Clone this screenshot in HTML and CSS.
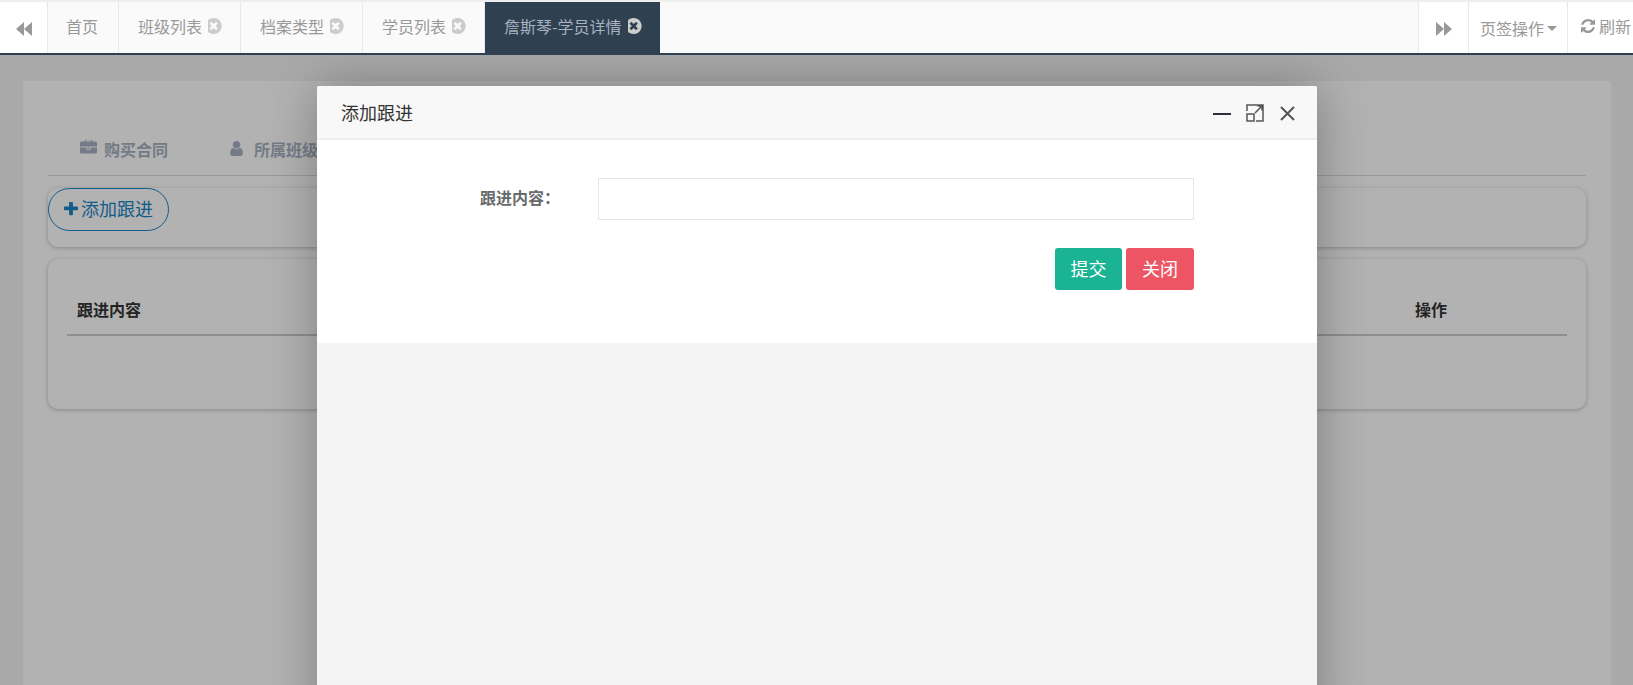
FILE: index.html
```html
<!DOCTYPE html>
<html lang="zh">
<head>
<meta charset="utf-8">
<title>学员详情</title>
<link rel="stylesheet" href="styles.css">
</head>
<body>
<nav class="nav">
  <button class="nav-arrow"><svg class="ico-arrow" viewBox="0 0 16 14"><path d="M8 0v14L0 7zM16 0v14L8 7z"/></svg></button>
  <div class="tabs">
    <a class="tab">首页</a>
    <a class="tab">班级列表<svg class="ico-close" viewBox="256 128 1280 1536"><path d="M1149 1122q0-26-19-45l-181-181 181-181q19-19 19-45 0-27-19-46l-90-90q-19-19-46-19-26 0-45 19l-181 181-181-181q-19-19-45-19-27 0-46 19l-90 90q-19 19-19 46 0 26 19 45l181 181-181 181q-19 19-19 45 0 27 19 46l90 90q19 19 46 19 26 0 45-19l181-181 181 181q19 19 45 19 27 0 46-19l90-90q19-19 19-46zm387-226q0 209-103 385.5t-279.5 279.5-385.5 103-385.5-103-279.5-279.5-103-385.5 103-385.5 279.5-279.5 385.5-103 385.5 103 279.5 279.5 103 385.5z"/></svg></a>
    <a class="tab">档案类型<svg class="ico-close" viewBox="256 128 1280 1536"><path d="M1149 1122q0-26-19-45l-181-181 181-181q19-19 19-45 0-27-19-46l-90-90q-19-19-46-19-26 0-45 19l-181 181-181-181q-19-19-45-19-27 0-46 19l-90 90q-19 19-19 46 0 26 19 45l181 181-181 181q-19 19-19 45 0 27 19 46l90 90q19 19 46 19 26 0 45-19l181-181 181 181q19 19 45 19 27 0 46-19l90-90q19-19 19-46zm387-226q0 209-103 385.5t-279.5 279.5-385.5 103-385.5-103-279.5-279.5-103-385.5 103-385.5 279.5-279.5 385.5-103 385.5 103 279.5 279.5 103 385.5z"/></svg></a>
    <a class="tab">学员列表<svg class="ico-close" viewBox="256 128 1280 1536"><path d="M1149 1122q0-26-19-45l-181-181 181-181q19-19 19-45 0-27-19-46l-90-90q-19-19-46-19-26 0-45 19l-181 181-181-181q-19-19-45-19-27 0-46 19l-90 90q-19 19-19 46 0 26 19 45l181 181-181 181q-19 19-19 45 0 27 19 46l90 90q19 19 46 19 26 0 45-19l181-181 181 181q19 19 45 19 27 0 46-19l90-90q19-19 19-46zm387-226q0 209-103 385.5t-279.5 279.5-385.5 103-385.5-103-279.5-279.5-103-385.5 103-385.5 279.5-279.5 385.5-103 385.5 103 279.5 279.5 103 385.5z"/></svg></a>
    <a class="tab tab-active">詹斯琴-学员详情<svg class="ico-close" viewBox="256 128 1280 1536"><path d="M1149 1122q0-26-19-45l-181-181 181-181q19-19 19-45 0-27-19-46l-90-90q-19-19-46-19-26 0-45 19l-181 181-181-181q-19-19-45-19-27 0-46 19l-90 90q-19 19-19 46 0 26 19 45l181 181-181 181q-19 19-19 45 0 27 19 46l90 90q19 19 46 19 26 0 45-19l181-181 181 181q19 19 45 19 27 0 46-19l90-90q19-19 19-46zm387-226q0 209-103 385.5t-279.5 279.5-385.5 103-385.5-103-279.5-279.5-103-385.5 103-385.5 279.5-279.5 385.5-103 385.5 103 279.5 279.5 103 385.5z"/></svg></a>
  </div>
  <div class="nav-right">
    <button class="nav-forward"><svg class="ico-arrow" viewBox="0 0 16 14"><path d="M0 0v14l8-7zM8 0v14l8-7z"/></svg></button>
    <button class="nav-menu">页签操作<span class="caret"></span></button>
    <button class="nav-refresh"><svg class="ico-refresh" viewBox="128 128 1536 1536"><path d="M1639 1056q0 5-1 7-64 268-268 434.5t-478 166.5q-146 0-282.5-55t-243.5-157l-129 129q-19 19-45 19t-45-19-19-45v-448q0-26 19-45t45-19h448q26 0 45 19t19 45-19 45l-137 137q71 66 161 102t187 36q134 0 250-65t186-179q11-17 53-117 8-23 30-23h192q13 0 22.5 9.5t9.5 22.5zm25-800v448q0 26-19 45t-45 19h-448q-26 0-45-19t-19-45 19-45l138-138q-148-137-349-137-134 0-250 65t-186 179q-11 17-53 117-8 23-30 23h-199q-13 0-22.5-9.5t-9.5-22.5v-7q65-268 270-434.5t480-166.5q146 0 284 55.5t245 156.5l130-129q19-19 45-19t45 19 19 45z"/></svg>刷新</button>
  </div>
</nav>

<main class="frame">
  <section class="panel">
    <div class="page-tabs">
      <a class="page-tab"><svg class="ico-case" viewBox="0 128 1792 1536"><path d="M640 256h512v-128h-512v128zm1152 640v480q0 66-47 113t-113 47h-1472q-66 0-113-47t-47-113v-480h672v160q0 26 19 45t45 19h320q26 0 45-19t19-45v-160h672zm-768 0v128h-256v-128h256zm768-480v384h-1792v-384q0-66 47-113t113-47h352v-160q0-40 28-68t68-28h576q40 0 68 28t28 68v160h352q66 0 113 47t47 113z"/></svg>购买合同</a>
      <a class="page-tab"><svg class="ico-user" viewBox="256 128 1280 1536"><path d="M1536 1399q0 109-62.5 187t-150.5 78h-854q-88 0-150.5-78t-62.5-187q0-85 8.5-160.5t31.5-152 58.5-131 94-89 134.5-34.5q131 128 313 128t313-128q76 0 134.5 34.5t94 89 58.5 131 31.5 152 8.5 160.5zm-256-887q0 159-112.5 271.5t-271.5 112.5-271.5-112.5-112.5-271.5 112.5-271.5 271.5-112.5 271.5 112.5 112.5 271.5z"/></svg>所属班级</a>
    </div>
    <div class="card card-toolbar">
      <button class="btn-add"><svg class="ico-plus" viewBox="192 192 1408 1408"><path d="M1600 736v192q0 40-28 68t-68 28h-416v416q0 40-28 68t-68 28h-192q-40 0-68-28t-28-68v-416h-416q-40 0-68-28t-28-68v-192q0-40 28-68t68-28h416v-416q0-40 28-68t68-28h192q40 0 68 28t28 68v416h416q40 0 68 28t28 68z"/></svg>添加跟进</button>
    </div>
    <div class="card card-table">
      <div class="table-head">
        <span class="th">跟进内容</span>
        <span class="th">操作</span>
      </div>
    </div>
  </section>

  <div class="overlay"></div>

  <div class="dialog">
    <header class="dialog-head">
      <h2 class="dialog-title">添加跟进</h2>
      <div class="dialog-tools">
        <span class="tool-min"></span>
        <svg class="tool-icon" viewBox="0 0 18 18"><path class="tool-stroke" d="M1 7V1h16v16H10M1 10h7v7H1zM9 9l7-7M11.500 2H16v4.500"/></svg>
        <svg class="tool-icon tool-close" viewBox="0 0 15 15"><path class="tool-stroke tool-stroke-x" d="M1 1l13 13M14 1L1 14"/></svg>
      </div>
    </header>
    <div class="dialog-body">
      <div class="form-row">
        <label class="form-label">跟进内容：</label>
        <input class="form-input" type="text">
      </div>
      <div class="form-actions">
        <button class="btn btn-ok">提交</button>
        <button class="btn btn-cancel">关闭</button>
      </div>
    </div>
    <div class="dialog-rest"></div>
  </div>
</main>
</body>
</html>
```
FILE: styles.css
```css
* { box-sizing: border-box; }
html, body { margin: 0; height: 685px; overflow: hidden; }
body {
  font-family: "Noto Sans CJK SC", "Liberation Sans", sans-serif;
  font-size: 16px;
  color: #676a6c;
  background: #f3f3f4;
}
button { font: inherit; border: 0; padding: 0; background: none; color: inherit; }

/* top tab bar */
.nav {
  display: flex;
  height: 55px;
  background: #fafafa;
  border-top: 2px solid #eeeeee;
  border-bottom: 2px solid #2f4050;
  color: #999;
}
.nav-arrow, .nav-forward { display: flex; align-items: center; justify-content: center; padding-top: 3px; background: #fff; fill: #999; }
.nav-arrow { width: 48px; border-right: 1px solid #e7eaec; }
.ico-arrow { width: 16px; height: 14px; }
.tabs { display: flex; flex: 1; }
.tab {
  display: flex;
  align-items: center;
  gap: 5px;
  padding: 0 19px 4px;
  border-right: 1px solid #e7eaec;
  line-height: 1;
  white-space: nowrap;
  width: 122px;
}
.tab:first-child { width: 71px; padding-left: 18px; }
.tab-active { width: 175px; background: #2f4050; color: #a7b1c2; border-right: 0; }
.ico-close { width: 14px; height: 16px; margin: 1px 0 0 1px; fill: #ccc; flex: none; }
.nav-right { display: flex; background: #fff; }
.nav-forward { width: 50px; border-left: 1px solid #e7eaec; }
.nav-menu {
  display: flex;
  align-items: center;
  width: 100px;
  padding: 1px 0 0 11px;
  border-left: 1px solid #e7eaec;
  border-right: 1px solid #e7eaec;
}
.caret {
  margin-left: 3px;
  border-left: 5px solid transparent;
  border-right: 5px solid transparent;
  border-top: 5px solid #999;
}
.nav-refresh {
  display: flex;
  align-items: center;
  gap: 4px;
  width: 65px;
  padding: 0 0 4px 13px;
  white-space: nowrap;
}
.ico-refresh { width: 14px; height: 14px; fill: #999; flex: none; }

/* page inside the frame */
.frame {
  position: relative;
  height: 630px;
  overflow: hidden;
  padding: 26px 22px 0 23px;
}
.panel {
  height: 100%;
  background: #fff;
  padding: 25px 25px 0;
}
.page-tabs {
  display: flex;
  height: 70px;
  padding: 28px 0 0 32px;
  border-bottom: 1px solid #ddd;
  font-weight: 700;
  color: #a7b1c2;
}
.page-tab { display: flex; align-items: flex-start; height: 30px; line-height: 30px; margin-right: 62px; white-space: nowrap; }
.ico-case { width: 17px; height: 15px; margin: 6px 7px 0 0; fill: #a7b1c2; }
.ico-user { width: 13px; height: 15px; margin: 7px 11px 0 0; fill: #a7b1c2; }
.card {
  margin-top: 12px;
  background: #fff;
  border-radius: 10px;
  box-shadow: 0 1px 4px rgba(0, 0, 0, .25);
}
.card-toolbar { height: 59px; }
.btn-add {
  display: flex;
  align-items: center;
  gap: 3px;
  width: 121px;
  height: 43px;
  margin-top: 1px;
  padding: 0 0 4px 15px;
  border: 1px solid #1c84c6;
  border-radius: 22px;
  color: #1c84c6;
  font-size: 18px;
  white-space: nowrap;
}
.ico-plus { width: 14px; height: 14px; margin-top: 3px; fill: #1c84c6; flex: none; }
.card-table { height: 150px; padding: 0 19px; }
.table-head {
  display: flex;
  justify-content: space-between;
  align-items: center;
  height: 77px;
  padding: 25px 120px 0 10px;
  border-bottom: 2px solid #ccc;
}
.th { font-weight: 700; color: #333; line-height: 30px; }

/* modal */
.overlay { position: absolute; inset: 0; background: rgba(0, 0, 0, .3); }
.dialog {
  position: absolute;
  top: 31px;
  left: 317px;
  width: 1000px;
  height: 640px;
  background: #f3f3f3;
  border-radius: 2px;
  box-shadow: 1px 1px 50px rgba(0, 0, 0, .3);
}
.dialog-head {
  display: flex;
  align-items: center;
  justify-content: space-between;
  height: 54px;
  padding: 0 22px 0 24px;
  background: #f8f8f8;
  border-bottom: 2px solid #eee;
  border-radius: 2px 2px 0 0;
}
.dialog-title { margin: 0; font-size: 18px; font-weight: 400; color: #333; }
.dialog-tools { display: flex; align-items: center; gap: 15px; margin-top: 2px; }
.tool-min { width: 18px; height: 2px; background: #2f2f3c; margin-top: 1px; }
.tool-icon { width: 18px; height: 18px; }
.tool-close { width: 15px; height: 15px; margin-left: 1px; }
.tool-stroke { fill: none; stroke: #555; stroke-width: 1.500; }
.tool-stroke-x { stroke-width: 2; }
.dialog-body {
  height: 203px;
  padding: 38px 123px 0 0;
  background: #fff;
}
.form-row { display: flex; align-items: center; justify-content: flex-end; height: 42px; }
.form-label { margin-right: 38px; padding-bottom: 5px; font-weight: 700; white-space: nowrap; }
.form-input {
  width: 596px;
  height: 42px;
  border: 1px solid #e5e6e7;
  background: #fff;
  outline: 0;
}
.form-actions { display: flex; justify-content: flex-end; gap: 4px; margin-top: 28px; }
.btn {
  width: 67px;
  height: 42px;
  padding-bottom: 2px;
  border-radius: 3px;
  color: #fff;
  font-size: 18px;
}
.btn-ok { background: #1ab394; }
.btn-cancel { width: 68px; background: #ed5565; }
```
